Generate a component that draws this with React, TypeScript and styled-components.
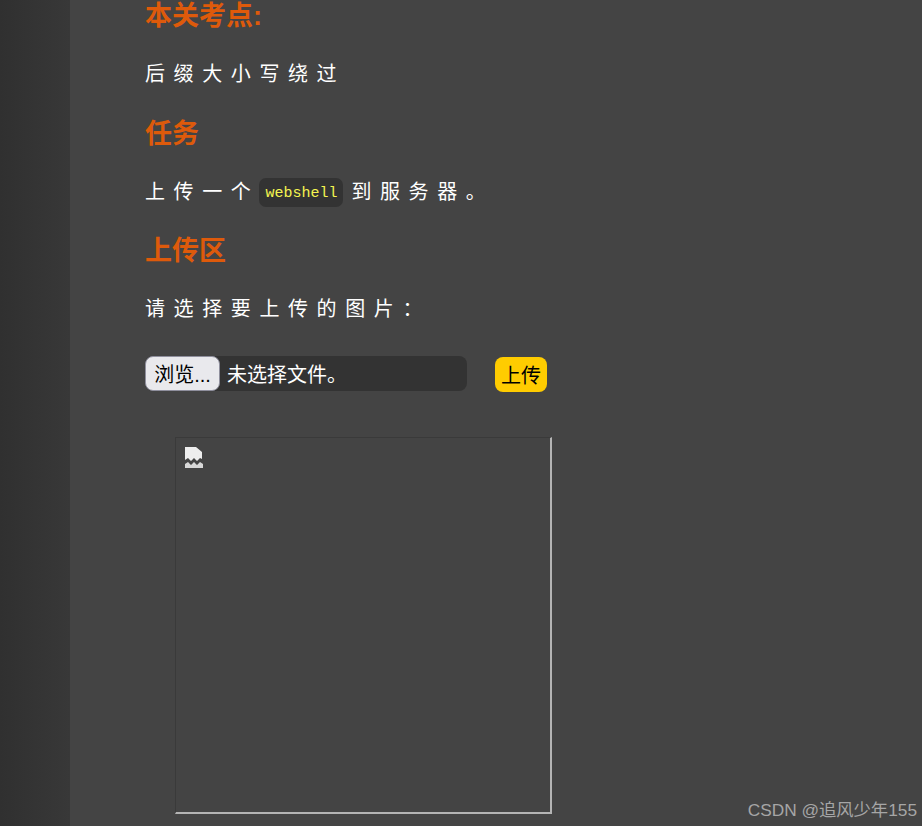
import React from "react";
import styled, { createGlobalStyle } from "styled-components";

const Global = createGlobalStyle`
  html, body { margin: 0; padding: 0; height: 826px; overflow: hidden; background: #444; }
  #root { height: 826px; }
`;
const cjk = `"Liberation Sans", "Noto Sans CJK SC", sans-serif`;

const Page = styled.div`
  position: relative;
  display: flex;
  height: 826px;
  overflow: hidden;
  font-family: ${cjk};
`;
const Sidebar = styled.aside`
  width: 70px;
  flex: none;
  background: linear-gradient(to right, #303030, #383838);
`;
const Main = styled.main`
  flex: 1;
  background: #444;
  padding-left: 75px;
`;
const Heading = styled.h3<{ $top: number }>`
  margin: ${(p) => p.$top}px 0 0;
  height: 32px;
  font-size: 27px;
  line-height: 32px;
  font-weight: 700;
  color: #de5a0b;
  letter-spacing: 0;
`;
const Para = styled.p<{ $top: number }>`
  margin: ${(p) => p.$top}px 0 0;
  height: 30px;
  display: flex;
  align-items: center;
  font-size: 20px;
  line-height: 30px;
  letter-spacing: 8.6px;
  color: #fff;
  white-space: pre;
`;
const Code = styled.code`
  display: inline-block;
  box-sizing: border-box;
  height: 29px;
  line-height: 29px;
  padding: 1px 6px 0;
  margin-right: 8px;
  background: #333;
  border-radius: 7px;
  font-family: "Liberation Mono", monospace;
  font-size: 15px;
  font-weight: 400;
  letter-spacing: 0;
  color: #f5f550;
`;
const UploadRow = styled.form`
  display: flex;
  margin-top: 32px;
  height: 36px;
`;
const FileField = styled.div`
  display: flex;
  align-items: center;
  align-self: flex-start;
  width: 322px;
  height: 35px;
  background: #333;
  border-radius: 8px;
  color: #fff;
  font-size: 20px;
`;
const Browse = styled.button`
  width: 75px;
  height: 35px;
  padding: 0;
  box-sizing: border-box;
  background: #e9e9ed;
  border: 1px solid #8f8f9d;
  border-radius: 8px;
  color: #000;
  font-family: ${cjk};
  font-size: 20px;
`;
const FileName = styled.span`
  margin-left: 7px;
`;
const Submit = styled.button`
  align-self: flex-end;
  margin-left: 28px;
  width: 52px;
  height: 35px;
  padding: 0;
  background: #ffcc00;
  border: none;
  border-radius: 8px;
  color: #000;
  font-family: ${cjk};
  font-size: 20px;
`;
const Preview = styled.div`
  box-sizing: border-box;
  width: 377px;
  height: 377px;
  margin: 45px 0 0 30px;
  border-style: solid;
  border-width: 1px 2px 2px 1px;
  border-color: #3a3a3a #b4b4b4 #b4b4b4 #3a3a3a;
  padding: 8px;
`;
const Broken = styled.svg`
  display: block;
  width: 20px;
  height: 22px;
`;
const Watermark = styled.div`
  position: absolute;
  right: 5px;
  bottom: 5px;
  font-size: 17.3px;
  line-height: 22px;
  color: #a6a6a6;
`;

export default function App() {
  return (
    <Page>
      <Global />
      <Sidebar />
      <Main>
        <Heading $top={0}>本关考点:</Heading>
        <Para $top={27}>后缀大小写绕过</Para>
        <Heading $top={29}>任务</Heading>
        <Para $top={27}>
          上传一个<Code>webshell</Code>到服务器。
        </Para>
        <Heading $top={28}>上传区</Heading>
        <Para $top={27}>请选择要上传的图片：</Para>
        <UploadRow>
          <FileField>
            <Browse type="button">浏览...</Browse>
            <FileName>未选择文件。</FileName>
          </FileField>
          <Submit type="button">上传</Submit>
        </UploadRow>
        <Preview>
          <Broken viewBox="0 0 20 22">
            <path d="M1 1h11l6 5v7l-2-1-3 3-3-3-3 3-3-3-3 2z" fill="#eeeeee" />
            <path d="M1 18l3-2 3 3 3-3 3 3 3-3 3 2v4H1z" fill="#d8d8d8" />
          </Broken>
        </Preview>
      </Main>
      <Watermark>CSDN @追风少年155</Watermark>
    </Page>
  );
}
